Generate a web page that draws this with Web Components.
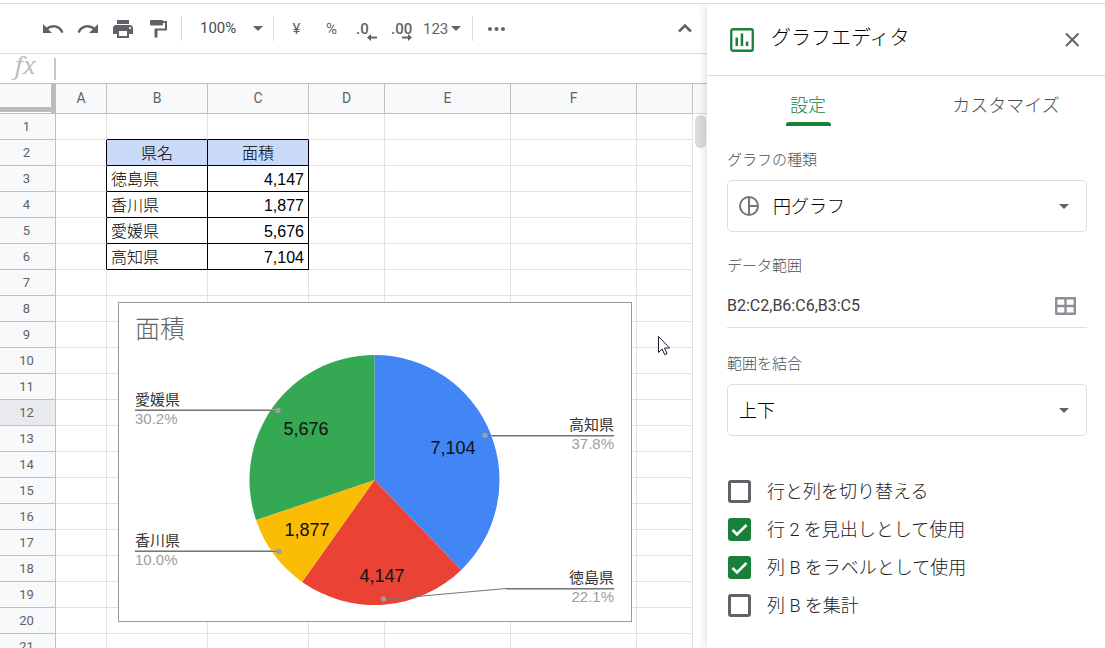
<!DOCTYPE html>
<html lang="ja">
<head>
<meta charset="utf-8">
<title>グラフエディタ</title>
<style>
  html, body { height: 100%; }
  body {
    margin: 0; overflow: hidden; background: #fff; color: #3c4043;
    font-family: Roboto, "Noto Sans CJK JP", sans-serif; font-size: 15px;
  }
</style>
</head>
<body>
<sheet-app></sheet-app>

<template id="app-tpl">
  <style>
    :host { display: flex; flex-direction: column; height: 100vh; overflow: hidden; }
    .strip { flex: none; height: 3px; border-bottom: 1px solid #dadce0; }
    .body { flex: 1; min-height: 0; display: flex; }
    main { flex: 1; min-width: 0; display: flex; flex-direction: column; position: relative; }
    sheet-grid { flex: 1; min-height: 0; }
    chart-editor { flex: 0 0 398px; }
    .pointer { position: absolute; left: 658px; top: 332px; }
  </style>
  <div class="strip"></div>
  <div class="body">
    <main>
      <sheet-toolbar></sheet-toolbar>
      <formula-bar></formula-bar>
      <sheet-grid><pie-chart></pie-chart></sheet-grid>
      <svg class="pointer" width="13" height="20" viewBox="0 0 13 20" aria-hidden="true">
        <path d="M.5.5v16l3.600-3.500 2.600 5.700 2.400-1-2.500-5.700h5z" fill="#fff" stroke="#1a1a2a"/>
      </svg>
    </main>
    <chart-editor></chart-editor>
  </div>
</template>

<template id="toolbar-tpl">
  <style>
    :host { display: flex; align-items: center; flex: none; height: 49px; padding-left: 35px; border-bottom: 1px solid #dadce0; color: #5f6368; }
    button, select { border: 0; margin: 0; padding: 0; background: none; color: inherit; font: 400 15px Roboto, sans-serif; }
    button { display: flex; align-items: center; justify-content: center; width: 35px; height: 36px; flex: none; }
    svg { display: block; fill: currentColor; flex: none; }
    .sep { width: 1px; height: 25px; background: #dadce0; flex: none; }
    .zoom { display: flex; align-items: center; width: 91px; }
    .zoom select { appearance: none; width: 53px; margin-left: 18px; line-height: 20px; height: 22px; padding-bottom: 2px; color: #4a4d51; }
    .group { display: flex; padding-right: 6px; }
    .money { padding-left: 5px; padding-right: 0; }
    .dec { position: relative; font-weight: 500; justify-content: flex-start; padding-left: 7px; }
    .dec svg { position: absolute; right: 7px; bottom: 6px; }
    .fmt { width: 53px; gap: 3px; padding-left: 4px; justify-content: flex-start; }
    .more { width: 46px; }
    .up { margin-left: auto; margin-right: 5px; }
  </style>
  <div class="group">
    <button aria-label="元に戻す"><svg width="24" height="24" viewBox="0 0 24 24"><path d="M12.500 8c-2.650 0-5.050.99-6.900 2.600L2 7v9h9l-3.620-3.620c1.390-1.160 3.160-1.880 5.120-1.880 3.540 0 6.550 2.310 7.600 5.500l2.370-.78C21.080 11.030 17.150 8 12.500 8z"/></svg></button>
    <button aria-label="やり直し"><svg width="24" height="24" viewBox="0 0 24 24"><path d="M18.400 10.600C16.550 8.990 14.150 8 11.500 8c-4.650 0-8.580 3.030-9.960 7.220L3.900 16c1.050-3.190 4.050-5.500 7.600-5.500 1.950 0 3.730.72 5.120 1.880L13 16h9V7l-3.600 3.600z"/></svg></button>
    <button aria-label="印刷"><svg width="24" height="24" viewBox="0 0 24 24"><path d="M19 8H5c-1.660 0-3 1.340-3 3v6h4v4h12v-4h4v-6c0-1.660-1.340-3-3-3zm-3 11H8v-5h8v5zm3-7c-.55 0-1-.45-1-1s.45-1 1-1 1 .45 1 1-.45 1-1 1zm-1-9H6v4h12V3z"/></svg></button>
    <button aria-label="書式を貼り付け"><svg width="24" height="24" viewBox="0 0 24 24"><path d="M5 3h11q1 0 1 1h4v9.500H11.500V20.500H8.500V11.500H19V6h-2v1.500q0 1-1 1H5q-1 0-1-1V4q0-1 1-1z"/></svg></button>
  </div>
  <span class="sep"></span>
  <span class="zoom">
    <select aria-label="ズーム"><option>100%</option></select>
    <svg width="10" height="5" viewBox="0 0 10 5"><path d="M0 0h10L5 5z"/></svg>
  </span>
  <span class="sep"></span>
  <div class="group money">
    <button aria-label="通貨">¥</button>
    <button aria-label="パーセント">%</button>
    <button class="dec" aria-label="小数点以下の桁数を減らす">.0<svg width="10" height="7" viewBox="0 0 10 7"><path d="M0 3.500L4 0v2.500h6v2H4V7z"/></svg></button>
    <button class="dec" aria-label="小数点以下の桁数を増やす">.00<svg width="10" height="7" viewBox="0 0 10 7"><path d="M10 3.500L6 0v2.500H0v2h6V7z"/></svg></button>
    <button class="fmt" aria-label="表示形式の詳細">123<svg width="10" height="5" viewBox="0 0 10 5"><path d="M0 0h10L5 5z"/></svg></button>
  </div>
  <span class="sep"></span>
  <button class="more" aria-label="その他"><svg width="17" height="4" viewBox="0 0 17 4"><circle cx="2" cy="2" r="2"/><circle cx="8.500" cy="2" r="2"/><circle cx="15" cy="2" r="2"/></svg></button>
  <button class="up" aria-label="メニューを非表示"><svg width="16" height="12" viewBox="0 0 16 12"><path d="M2 8.500L8 2.500l6 6" fill="none" stroke="currentColor" stroke-width="2.600"/></svg></button>
</template>

<template id="formula-tpl">
  <style>
    :host { display: flex; align-items: center; flex: none; height: 29px; border-bottom: 1px solid #c0c0c0; }
    label { width: 54px; padding-left: 15px; box-sizing: border-box; font: italic 24px/24px "Noto Serif", "Liberation Serif", serif; color: #bdbdbd; padding-bottom: 8px; }
    .bar { width: 2px; height: 22px; background: #c6c6c6; }
    input { flex: 1; min-width: 0; border: 0; outline: 0; font: 15px Roboto, sans-serif; background: none; }
  </style>
  <label for="f">fx</label><span class="bar"></span><input id="f">
</template>

<template id="grid-tpl">
  <style>
    :host { display: flex; overflow: hidden; position: relative; }
    .view { flex: 1; min-width: 0; }
    table { table-layout: fixed; width: 100%; border-collapse: separate; border-spacing: 0; }
    th, td { box-sizing: border-box; padding: 0 4px; height: 26px; border-right: 1px solid #e2e2e2; border-bottom: 1px solid #e2e2e2; overflow: hidden; white-space: nowrap; }
    th { background: #f8f9fa; color: #5f6368; font: 400 13px/20px Roboto, sans-serif; border-color: #c0c0c0; text-align: center; }
    thead th { height: 30px; font-size: 14px; padding: 0 0 2px; }
    tbody th { padding: 0 2px 0 0; }
    th.on { background: #e8eaed; }
    thead th.corner { border-bottom-color: #c0c0c0; border-right: 5px solid #bcbcbc; background: linear-gradient(#f8f9fa 23px, #bcbcbc 23px 28px, #fff 28px); }
    td { font: 16px/23px "Liberation Sans", "Noto Sans CJK JP", sans-serif; color: #000; padding-top: 2px; }
    td.r { border-right-color: #000; }
    td.b { border-bottom-color: #000; }
    td.name { font-weight: 300; }
    td.head { background: #c9daf8; text-align: center; }
    td.num { text-align: right; }
    .scroll { flex: none; width: 14px; }
    .scroll .top { height: 29px; background: #f8f9fa; border-bottom: 1px solid #dadce0; }
    .scroll .thumb { margin: 1px 1px 0 2px; height: 33px; border-radius: 6px; background: #dadce0; }
    ::slotted(pie-chart) { position: absolute; left: 118px; top: 218px; }
  </style>
  <div class="view"><table>
    <colgroup><col style="width:56px"><col style="width:51px"><col style="width:101px"><col style="width:101px"><col style="width:76px"><col style="width:126px"><col style="width:126px"><col></colgroup>
    <thead></thead><tbody></tbody>
  </table></div>
  <div class="scroll"><div class="top"></div><div class="thumb"></div></div>
  <slot></slot>
</template>

<template id="pie-tpl">
  <style>
    :host { display: block; border: 1px solid #999; background: #fff; }
    svg { display: block; }
    text { font-family: "Liberation Sans", "Noto Sans CJK JP", sans-serif; }
    .title { font-size: 25px; fill: #666; font-weight: 300; }
    .value { font-size: 18px; fill: #111; text-anchor: middle; }
    .name { font-size: 15px; fill: #333; }
    .pct { font-size: 15px; fill: #9e9e9e; }
    .end { text-anchor: end; }
    .lead { fill: none; stroke: #757575; }
    .under { stroke: #b4b4b4; }
    circle { fill: #9e9e9e; }
  </style>
  <svg width="512" height="318" viewBox="0 0 512 318" role="img" aria-label="面積">
    <text class="title" x="16" y="35">面積</text>
    <g id="slices"></g><g id="labels"></g>
  </svg>
</template>

<template id="editor-tpl">
  <style>
    :host { display: flex; flex-direction: column; background: #fff; box-shadow: 0 0 10px rgba(60,64,67,.22); clip-path: inset(0 0 0 -12px); position: relative; }
    header { display: flex; align-items: center; height: 71px; padding: 0 20px 0 23px; border-bottom: 1px solid #dadce0; }
    h1 { flex: 1; margin: 0 0 4px 17px; font-size: 20px; line-height: 28px; font-weight: 300; color: #000; }
    button { border: 0; background: none; padding: 0; font: inherit; color: #5f6368; }
    header svg, header button { display: block; flex: none; }
    nav { display: grid; grid-template-columns: 1fr 1fr; height: 50px; padding-left: 2px; }
    nav button { display: flex; flex-direction: column; align-items: center; justify-content: flex-end; font-size: 18px; line-height: 24px; font-weight: 300; gap: 4px; color: #4a4e53; }
    nav button::after { content: ""; height: 4px; width: 45px; border-radius: 3px 3px 0 0; }
    nav .on { color: #188038; }
    nav .on::after { background: #188038; }
    .fields { display: grid; gap: 24px; padding: 24px 18px 0 20px; }
    .checks { padding: 36px 18px 0 21px; }
  </style>
  <header>
    <svg width="24" height="24" viewBox="0 0 24 24" aria-hidden="true"><rect x="1.250" y="1.250" width="21.500" height="21.500" rx="1.500" fill="none" stroke="#188038" stroke-width="2.300"/><path d="M5.500 9.500H8V18H5.500zM10.700 5.500h2.500V18h-2.500zM15.800 13.500h2.500V18h-2.500z" fill="#188038"/></svg>
    <h1>グラフエディタ</h1>
    <button aria-label="閉じる"><svg width="26" height="26" viewBox="0 0 26 26"><path d="M7 6.500l12.500 12.500M19.500 6.500L7 19" stroke="#5f6368" stroke-width="2"/></svg></button>
  </header>
  <nav><button class="on">設定</button><button>カスタマイズ</button></nav>
  <div class="fields">
    <select-field label="グラフの種類" value="円グラフ"><svg slot="icon" width="20" height="20" viewBox="0 0 20 20"><path d="M10 1a9 9 0 1 0 0 18a9 9 0 1 0 0-18zM10 1v18M10 10h9" fill="none" stroke="#757575" stroke-width="2"/></svg></select-field>
    <range-field label="データ範囲" value="B2:C2,B6:C6,B3:C5"></range-field>
    <select-field label="範囲を結合" value="上下"></select-field>
  </div>
  <div class="checks">
    <check-row>行と列を切り替える</check-row>
    <check-row checked>行 2 を見出しとして使用</check-row>
    <check-row checked>列 B をラベルとして使用</check-row>
    <check-row>列 B を集計</check-row>
  </div>
</template>

<template id="select-tpl">
  <style>
    :host { display: grid; gap: 10px; }
    label { font-size: 15px; line-height: 20px; font-weight: 300; color: #4a4e53; }
    .box { display: flex; align-items: center; height: 52px; box-sizing: border-box; padding: 0 17px 0 11px; border: 1px solid #dadce0; border-radius: 5px; }
    ::slotted(svg) { flex: none; margin-right: 14px; }
    select { flex: 1; min-width: 0; appearance: none; border: 0; margin: 0; padding: 2px 0 0; background: none; height: 30px; font: 300 18px/26px Roboto, "Noto Sans CJK JP", sans-serif; color: #000; }
    svg { flex: none; fill: #5f6368; }
  </style>
  <label for="s"></label>
  <div class="box"><slot name="icon"></slot><select id="s"></select><svg width="10" height="5" viewBox="0 0 10 5"><path d="M0 0h10L5 5z"/></svg></div>
</template>

<template id="range-tpl">
  <style>
    :host { display: grid; gap: 10px; padding-bottom: 2px; }
    label { font-size: 15px; line-height: 20px; font-weight: 300; color: #4a4e53; }
    .box { display: flex; align-items: center; height: 41px; border-bottom: 1px solid #dadce0; padding-right: 11px; }
    input { flex: 1; min-width: 0; border: 0; outline: 0; padding: 0 0 2px; background: none; font: 16px/22px Roboto, sans-serif; color: #3c4043; }
    button { border: 0; padding: 0 0 2px; background: none; }
    svg { display: block; }
  </style>
  <label for="r"></label>
  <div class="box"><input id="r"><button aria-label="データ範囲を選択"><svg width="21" height="18" viewBox="0 0 21 18"><path d="M1.200 1.200h18.600v15.600H1.200zM10.500 1v16M1 9h19" fill="none" stroke="#8e8f94" stroke-width="2.400" stroke-linejoin="round"/></svg></button></div>
</template>

<template id="check-tpl">
  <style>
    :host { display: block; }
    label { display: flex; align-items: center; gap: 16px; height: 38px; font-size: 18px; line-height: 26px; font-weight: 300; color: #202124; }
    span { padding-top: 2px; }
    input { appearance: none; flex: none; width: 23px; height: 23px; margin: 0; border: 3px solid #5f6368; border-radius: 3px; }
    input:checked { border: 0; background: #188038 url("data:image/svg+xml,%3Csvg xmlns='http://www.w3.org/2000/svg' viewBox='0 0 23 23'%3E%3Cpath d='M4.500 12l4.500 4.500L18.500 7' fill='none' stroke='white' stroke-width='2.600'/%3E%3C/svg%3E"); }
  </style>
  <label><input type="checkbox"><span><slot></slot></span></label>
</template>

<script>
  class Part extends HTMLElement {
    constructor() {
      super();
      this.attachShadow({ mode: 'open' })
        .append(document.getElementById(this.constructor.tpl).content.cloneNode(true));
    }
    $(q) { return this.shadowRoot.querySelector(q); }
  }
  class SheetToolbar extends Part { static tpl = 'toolbar-tpl'; }
  class FormulaBar extends Part { static tpl = 'formula-tpl'; }

  class SheetGrid extends Part {
    static tpl = 'grid-tpl';
    connectedCallback() {
      const data = { 2: ['県名', '面積'], 3: ['徳島県', '4,147'], 4: ['香川県', '1,877'], 5: ['愛媛県', '5,676'], 6: ['高知県', '7,104'] };
      this.$('thead').innerHTML = '<tr><th class="corner"></th>' +
        ['A', 'B', 'C', 'D', 'E', 'F', ''].map(c => `<th scope="col">${c}</th>`).join('') + '</tr>';
      let rows = '';
      for (let r = 1; r <= 21; r++) {
        rows += `<tr><th scope="row"${r === 12 ? ' class="on"' : ''}>${r}</th>`;
        for (let c = 0; c < 7; c++) {
          const d = data[r], cls = [];
          if (d && c < 3) cls.push('r');
          if ((c === 1 || c === 2) && (d || r === 1)) cls.push('b');
          let text = '';
          if (d && (c === 1 || c === 2)) {
            text = d[c - 1];
            if (r === 2) cls.push('head', 'name'); else cls.push(c === 1 ? 'name' : 'num');
          }
          rows += `<td class="${cls.join(' ')}">${text}</td>`;
        }
        rows += '</tr>';
      }
      this.$('tbody').innerHTML = rows;
    }
  }

  class PieChart extends Part {
    static tpl = 'pie-tpl';
    connectedCallback() {
      const cx = 255.5, cy = 177, R = 125;
      const items = [
        { name: '高知県', v: 7104, color: '#4285f4', at: [334, 151], dot: [366, 132.5], line: 'M366 132.5H495', y: 132, side: 'r' },
        { name: '徳島県', v: 4147, color: '#ea4335', at: [263, 279], dot: [264.5, 296], line: 'M264 296.5L387 285.500H495', y: 285, side: 'r' },
        { name: '香川県', v: 1877, color: '#fbbc04', at: [188, 233], dot: [160, 248.5], line: 'M160 248.500H16', y: 248, side: 'l' },
        { name: '愛媛県', v: 5676, color: '#34a853', at: [187, 132], dot: [159, 107.5], line: 'M159 107.500H16', y: 107, side: 'l' }
      ];
      const total = items.reduce((s, i) => s + i.v, 0);
      const pt = f => { const a = f * 2 * Math.PI; return (cx + R * Math.sin(a)) + ' ' + (cy - R * Math.cos(a)); };
      let acc = 0, slices = '', labels = '';
      for (const i of items) {
        const from = acc; acc += i.v / total;
        slices += `<path fill="${i.color}" d="M${cx} ${cy}L${pt(from)}A${R} ${R} 0 0 1 ${pt(acc)}z"/>`;
        const right = i.side === 'r';
        const x = right ? 495 : 16, end = right ? ' end' : '';
        const under = right ? `M${i.dot[0] > 300 ? i.dot[0] + 6 : 387} ${i.y + 1.5}H495` : `M16 ${i.y - .5}H${i.dot[0] - 3}`;
        labels += `<text class="value" x="${i.at[0]}" y="${i.at[1]}">${i.v.toLocaleString('en-US')}</text>
          <path class="under" d="${under}"/><path class="lead" d="${i.line}"/>
          <circle cx="${i.dot[0]}" cy="${i.dot[1]}" r="2.700"/>
          <text class="name${end}" x="${x}" y="${i.y - 5}">${i.name}</text>
          <text class="pct${end}" x="${x}" y="${i.y + 14}">${(i.v / total * 100).toFixed(1)}%</text>`;
      }
      this.$('#slices').innerHTML = slices;
      this.$('#labels').innerHTML = labels;
    }
  }

  class SelectField extends Part {
    static tpl = 'select-tpl';
    connectedCallback() {
      this.$('label').textContent = this.getAttribute('label');
      this.$('select').innerHTML = `<option>${this.getAttribute('value')}</option>`;
    }
  }
  class RangeField extends Part {
    static tpl = 'range-tpl';
    connectedCallback() {
      this.$('label').textContent = this.getAttribute('label');
      this.$('input').value = this.getAttribute('value');
    }
  }
  class CheckRow extends Part {
    static tpl = 'check-tpl';
    connectedCallback() { this.$('input').checked = this.hasAttribute('checked'); }
  }
  class ChartEditor extends Part { static tpl = 'editor-tpl'; }
  class SheetApp extends Part { static tpl = 'app-tpl'; }

  customElements.define('sheet-toolbar', SheetToolbar);
  customElements.define('formula-bar', FormulaBar);
  customElements.define('pie-chart', PieChart);
  customElements.define('sheet-grid', SheetGrid);
  customElements.define('select-field', SelectField);
  customElements.define('range-field', RangeField);
  customElements.define('check-row', CheckRow);
  customElements.define('chart-editor', ChartEditor);
  customElements.define('sheet-app', SheetApp);
</script>
</body>
</html>
